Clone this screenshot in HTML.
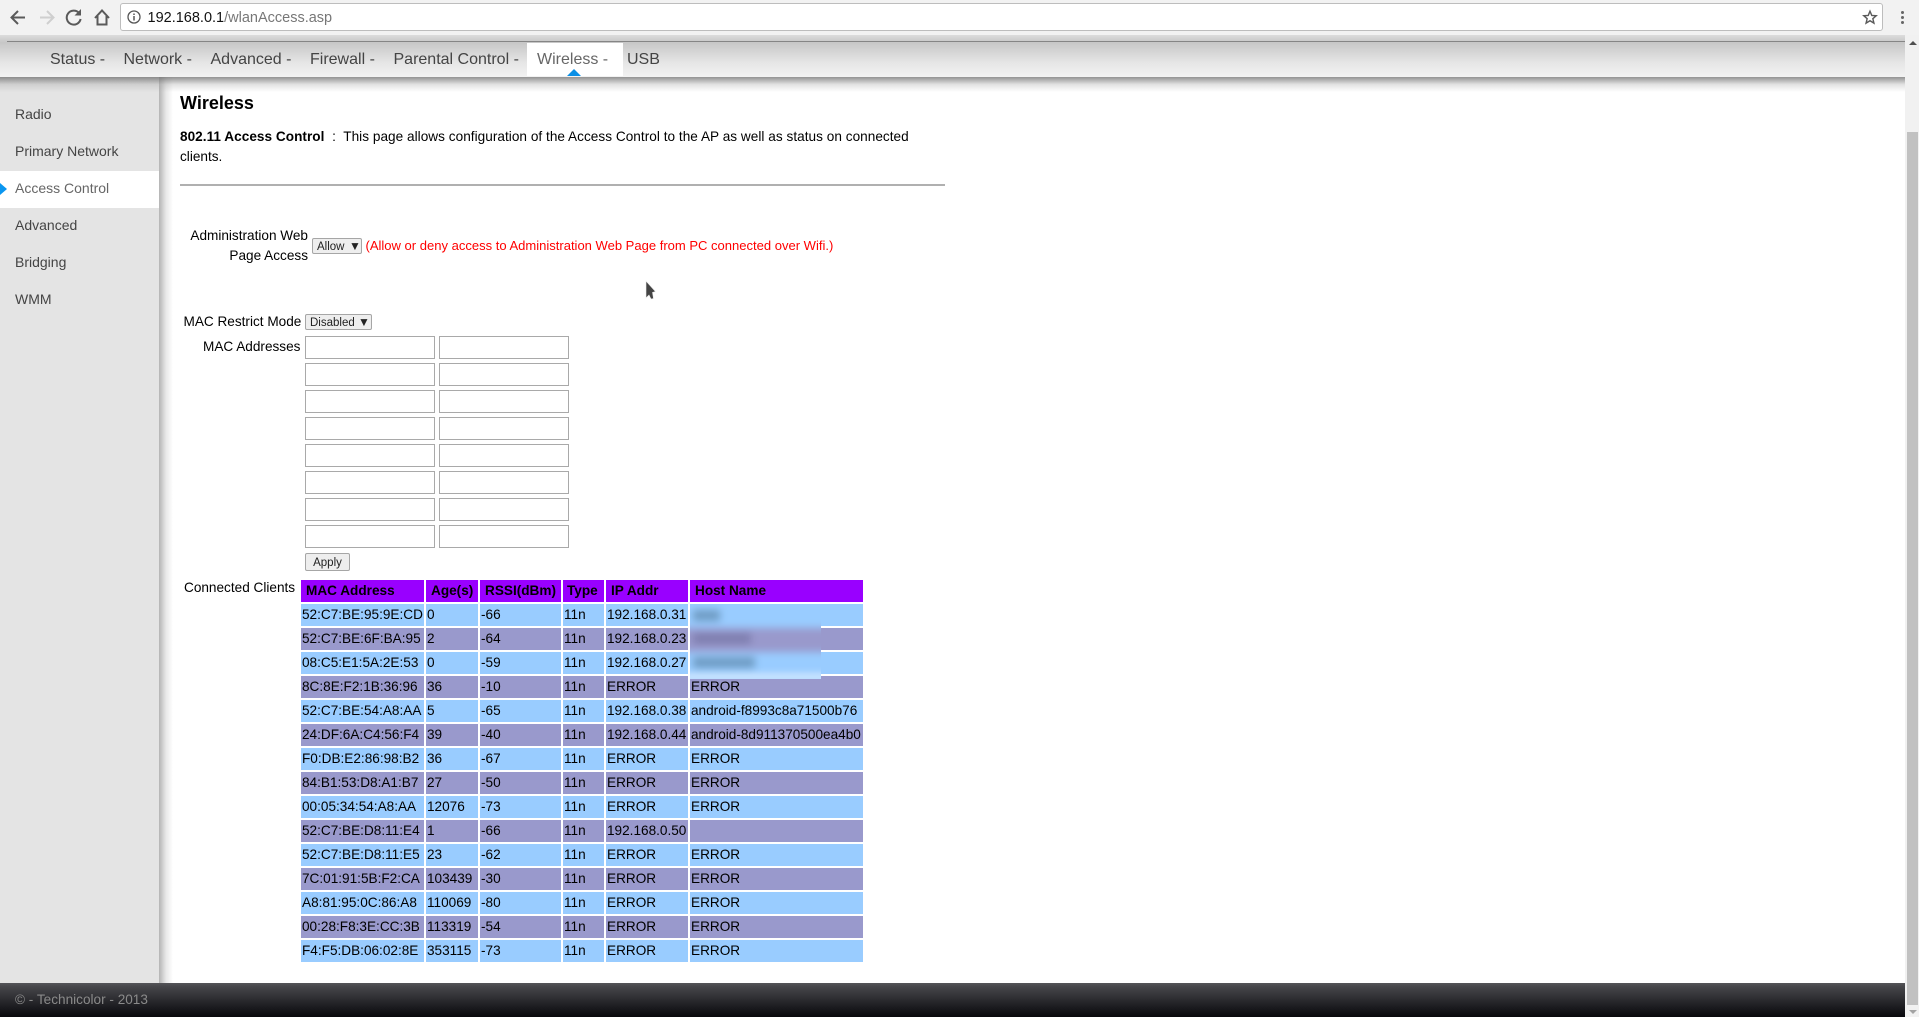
<!DOCTYPE html>
<html><head><meta charset="utf-8"><style>
html,body{margin:0;padding:0;width:1919px;height:1017px;overflow:hidden;background:#fff;font-family:"Liberation Sans",sans-serif;color:#000}
.a{position:absolute;white-space:nowrap}
.n{top:48.500px;line-height:22px;font-size:16px;color:#444}
.s{left:15px;line-height:20px;font-size:14px;color:#444}
.t{font-size:13.6px;line-height:20px}
.i{position:absolute;width:128px;height:21px;border:1px solid #a9a9a9;background:#fff;box-sizing:content-box}
.b{position:absolute;box-sizing:border-box;border:1px solid #a6a6a6;border-radius:2px;background:#eee;font-size:11.5px;color:#222;white-space:nowrap}
table{position:absolute;left:299px;top:578px;border-collapse:separate;border-spacing:2px;table-layout:fixed;font-size:13.6px;width:566px}
td,th{height:22px;padding:0 0 0 1px;text-align:left;font-weight:normal;white-space:nowrap;overflow:hidden;line-height:22px;box-sizing:border-box}
th{background:#9900ff;font-weight:bold;padding-left:5px}
tr.o td{background:#99ccff}
tr.e td{background:#9999cc}
</style></head><body>
<!-- browser toolbar -->
<div class="a" style="left:0;top:0;width:1919px;height:35px;background:#f2f2f2"></div>
<svg class="a" style="left:1px;top:0" width="120" height="35" viewBox="0 0 120 35" fill="none">
<path d="M24 17.5H11M17 11l-6.500 6.500L17 24" stroke="#5a5a5a" stroke-width="2"/>
<path d="M39 17.500h13M46 11l6.500 6.500L46 24" stroke="#cfcfcf" stroke-width="2"/>
</svg>
<svg class="a" style="left:0;top:0" width="120" height="35" viewBox="0 0 120 35" fill="none">
<path d="M79 13a7 7 0 1 0 1.600 6" stroke="#5a5a5a" stroke-width="2"/><path d="M81 9v6.500h-6.500z" fill="#5a5a5a"/>
<path d="M95 18l7-7.500 7 7.500M97.500 16v8.500h9V16" stroke="#5a5a5a" stroke-width="2"/>
</svg>
<div class="a" style="left:120px;top:3px;width:1763px;height:28px;box-sizing:border-box;border:1px solid #bdbdbd;border-radius:3px;background:#fff"></div>
<svg class="a" style="left:126px;top:10px" width="16" height="16" viewBox="0 0 16 16" fill="none"><circle cx="8" cy="7" r="6" stroke="#555" stroke-width="1.300"/><path d="M8 6v4.500" stroke="#555" stroke-width="1.500"/><path d="M8 3.500v1.500" stroke="#555" stroke-width="1.500"/></svg>
<div class="a" style="left:147.500px;top:8px;font-size:14.500px;line-height:20px;color:#777"><span style="color:#111">192.168.0.1</span>/wlanAccess.asp</div>
<svg class="a" style="left:1862px;top:9px" width="16" height="16" viewBox="0 0 18 18" fill="none"><path d="M9 2.500l2 4.700 5 .4-3.800 3.300 1.200 5L9 13.200l-4.400 2.700 1.200-5L2 7.600l5-.4z" stroke="#5a5a5a" stroke-width="1.600"/></svg>
<div class="a" style="left:1900.500px;top:11px;width:3px;height:3px;background:#666;border-radius:50%"></div>
<div class="a" style="left:1900.500px;top:16px;width:3px;height:3px;background:#666;border-radius:50%"></div>
<div class="a" style="left:1900.500px;top:21px;width:3px;height:3px;background:#666;border-radius:50%"></div>
<!-- page top band -->
<div class="a" style="left:0;top:35px;width:1905px;height:7px;background:linear-gradient(#dcdcdc,#c8c8c8)"></div>
<div class="a" style="left:0;top:42px;width:1905px;height:35px;background:linear-gradient(#c6c6c6,#e6e6e6 60%,#f2f2f2)"></div>
<div class="a" style="left:7px;top:41px;width:1898px;height:1px;background:#858585"></div>
<!-- wireless tab -->
<div class="a" style="left:527px;top:43px;width:96px;height:33px;background:#fff"></div>
<div class="a" style="left:567px;top:69px;width:0;height:0;border-left:7.500px solid transparent;border-right:7.500px solid transparent;border-bottom:7px solid #0a8fe6"></div>
<div class="a n" style="left:50px">Status -</div>
<div class="a n" style="left:123.500px">Network -</div>
<div class="a n" style="left:210.500px">Advanced -</div>
<div class="a n" style="left:310px">Firewall -</div>
<div class="a n" style="left:393.500px">Parental Control -</div>
<div class="a n" style="left:537px;color:#666">Wireless -</div>
<div class="a n" style="left:627px">USB</div>
<!-- sidebar -->
<div class="a" style="left:0;top:77px;width:159px;height:906px;background:#e4e4e4"></div>
<div class="a" style="left:159px;top:77px;width:14px;height:906px;background:linear-gradient(90deg,#b4b4b4,#e8e8e8 50%,#fff)"></div>
<div class="a" style="left:0;top:171px;width:159px;height:37px;background:#fff"></div>
<div class="a" style="left:0;top:183px;width:0;height:0;border-top:6px solid transparent;border-bottom:6px solid transparent;border-left:7px solid #0a96f0"></div>
<div class="a" style="left:0;top:77px;width:1905px;height:15px;background:linear-gradient(rgba(110,110,110,.75),rgba(160,160,160,.3) 50%,rgba(255,255,255,0))"></div>
<div class="a s" style="top:104px">Radio</div>
<div class="a s" style="top:141px">Primary Network</div>
<div class="a s" style="top:178px;color:#666">Access Control</div>
<div class="a s" style="top:215px">Advanced</div>
<div class="a s" style="top:252px">Bridging</div>
<div class="a s" style="top:289px">WMM</div>
<!-- content -->
<div class="a" style="left:180px;top:92px;font-size:18px;line-height:22px;font-weight:bold">Wireless</div>
<div class="a t" style="left:180px;top:127px;letter-spacing:.03px"><b>802.11 Access Control</b> &nbsp;:&nbsp; This page allows configuration of the Access Control to the AP as well as status on connected</div>
<div class="a t" style="left:180px;top:147px">clients.</div>
<div class="a" style="left:180px;top:184px;width:765px;height:2px;background:#b0b0b0"></div>
<div class="a t" style="left:180px;width:128px;top:226px;text-align:right;white-space:normal">Administration Web Page Access</div>
<div class="b" style="left:312px;top:238px;width:50px;height:16px;line-height:16px;padding-left:4px">Allow<span style="position:absolute;left:36px;top:-1px;font-size:12px;line-height:16px">▼</span></div>
<div class="a" style="left:365.500px;top:236px;color:#ff0000;font-size:13.030px;line-height:20px">(Allow or deny access to Administration Web Page from PC connected over Wifi.)</div>
<svg class="a" style="left:644px;top:279px" width="14" height="22" viewBox="0 0 14 22"><path d="M2 2l9.500 10.500-3 1 1 6-2.500 .5L5 16l-3 3z" fill="#444" stroke="#eee" stroke-width=".6"/></svg>
<div class="a t" style="left:183.500px;top:311.500px">MAC Restrict Mode</div>
<div class="b" style="left:305px;top:314px;width:67px;height:16px;line-height:16px;padding-left:4px">Disabled<span style="position:absolute;left:52px;top:-1px;font-size:12px;line-height:16px">▼</span></div>
<div class="a t" style="left:203px;top:337px">MAC Addresses</div>
<div class="i" style="left:305px;top:336px"></div><div class="i" style="left:439px;top:336px"></div>
<div class="i" style="left:305px;top:363px"></div><div class="i" style="left:439px;top:363px"></div>
<div class="i" style="left:305px;top:390px"></div><div class="i" style="left:439px;top:390px"></div>
<div class="i" style="left:305px;top:417px"></div><div class="i" style="left:439px;top:417px"></div>
<div class="i" style="left:305px;top:444px"></div><div class="i" style="left:439px;top:444px"></div>
<div class="i" style="left:305px;top:471px"></div><div class="i" style="left:439px;top:471px"></div>
<div class="i" style="left:305px;top:498px"></div><div class="i" style="left:439px;top:498px"></div>
<div class="i" style="left:305px;top:525px"></div><div class="i" style="left:439px;top:525px"></div>
<div class="b" style="left:305px;top:553px;width:45px;height:18px;line-height:18px;text-align:center">Apply</div>
<div class="a t" style="left:184px;top:578px">Connected Clients</div>
<table>
<colgroup><col style="width:123px"><col style="width:52px"><col style="width:81px"><col style="width:41px"><col style="width:82px"><col style="width:173px"></colgroup>
<tr><th>MAC Address</th><th>Age(s)</th><th>RSSI(dBm)</th><th style="padding-left:4px">Type</th><th>IP Addr</th><th>Host Name</th></tr>
<tr class="o"><td>52:C7:BE:95:9E:CD</td><td>0</td><td>-66</td><td>11n</td><td>192.168.0.31</td><td></td></tr>
<tr class="e"><td>52:C7:BE:6F:BA:95</td><td>2</td><td>-64</td><td>11n</td><td>192.168.0.23</td><td></td></tr>
<tr class="o"><td>08:C5:E1:5A:2E:53</td><td>0</td><td>-59</td><td>11n</td><td>192.168.0.27</td><td></td></tr>
<tr class="e"><td>8C:8E:F2:1B:36:96</td><td>36</td><td>-10</td><td>11n</td><td>ERROR</td><td>ERROR</td></tr>
<tr class="o"><td>52:C7:BE:54:A8:AA</td><td>5</td><td>-65</td><td>11n</td><td>192.168.0.38</td><td>android-f8993c8a71500b76</td></tr>
<tr class="e"><td>24:DF:6A:C4:56:F4</td><td>39</td><td>-40</td><td>11n</td><td>192.168.0.44</td><td>android-8d911370500ea4b0</td></tr>
<tr class="o"><td>F0:DB:E2:86:98:B2</td><td>36</td><td>-67</td><td>11n</td><td>ERROR</td><td>ERROR</td></tr>
<tr class="e"><td>84:B1:53:D8:A1:B7</td><td>27</td><td>-50</td><td>11n</td><td>ERROR</td><td>ERROR</td></tr>
<tr class="o"><td>00:05:34:54:A8:AA</td><td>12076</td><td>-73</td><td>11n</td><td>ERROR</td><td>ERROR</td></tr>
<tr class="e"><td>52:C7:BE:D8:11:E4</td><td>1</td><td>-66</td><td>11n</td><td>192.168.0.50</td><td></td></tr>
<tr class="o"><td>52:C7:BE:D8:11:E5</td><td>23</td><td>-62</td><td>11n</td><td>ERROR</td><td>ERROR</td></tr>
<tr class="e"><td>7C:01:91:5B:F2:CA</td><td>103439</td><td>-30</td><td>11n</td><td>ERROR</td><td>ERROR</td></tr>
<tr class="o"><td>A8:81:95:0C:86:A8</td><td>110069</td><td>-80</td><td>11n</td><td>ERROR</td><td>ERROR</td></tr>
<tr class="e"><td>00:28:F8:3E:CC:3B</td><td>113319</td><td>-54</td><td>11n</td><td>ERROR</td><td>ERROR</td></tr>
<tr class="o"><td>F4:F5:DB:06:02:8E</td><td>353115</td><td>-73</td><td>11n</td><td>ERROR</td><td>ERROR</td></tr>
</table>
<!-- blurred hostnames -->
<div class="a" style="left:690px;top:604px;width:131px;height:75px;overflow:hidden">
<div style="position:absolute;left:-12px;top:-8px;width:155px;height:91px;filter:blur(4px);background:#99ccff">
<div style="position:absolute;left:0;top:32px;width:155px;height:24px;background:#9999cc"></div>
<div style="position:absolute;left:0;top:79px;width:155px;height:4px;background:#fff"></div>
<div style="position:absolute;left:15px;top:14px;width:27px;height:11px;background:#6f9cc4"></div>
<div style="position:absolute;left:15px;top:37px;width:58px;height:11px;background:#7f7fb0"></div>
<div style="position:absolute;left:15px;top:61px;width:62px;height:11px;background:#6f9cc4"></div>
</div></div>
<!-- footer -->
<div class="a" style="left:0;top:983px;width:1905px;height:34px;background:linear-gradient(#555559 0,#47474b 10%,#1c1c20 70%,#08080c)"></div>
<div class="a" style="left:15px;top:990px;font-size:13.600px;line-height:20px;color:#8a8a8a">© - Technicolor - 2013</div>
<!-- scrollbar -->
<div class="a" style="left:1905px;top:35px;width:14px;height:982px;background:#f1f1f1"></div>
<div class="a" style="left:1907px;top:132px;width:11px;height:873px;background:#c1c1c1"></div>
<div class="a" style="left:1908.500px;top:41px;width:0;height:0;border-left:4px solid transparent;border-right:4px solid transparent;border-bottom:4px solid #505050"></div>
<div class="a" style="left:1908.500px;top:1010px;width:0;height:0;border-left:4px solid transparent;border-right:4px solid transparent;border-top:4px solid #a3a3a3"></div>
</body></html>
